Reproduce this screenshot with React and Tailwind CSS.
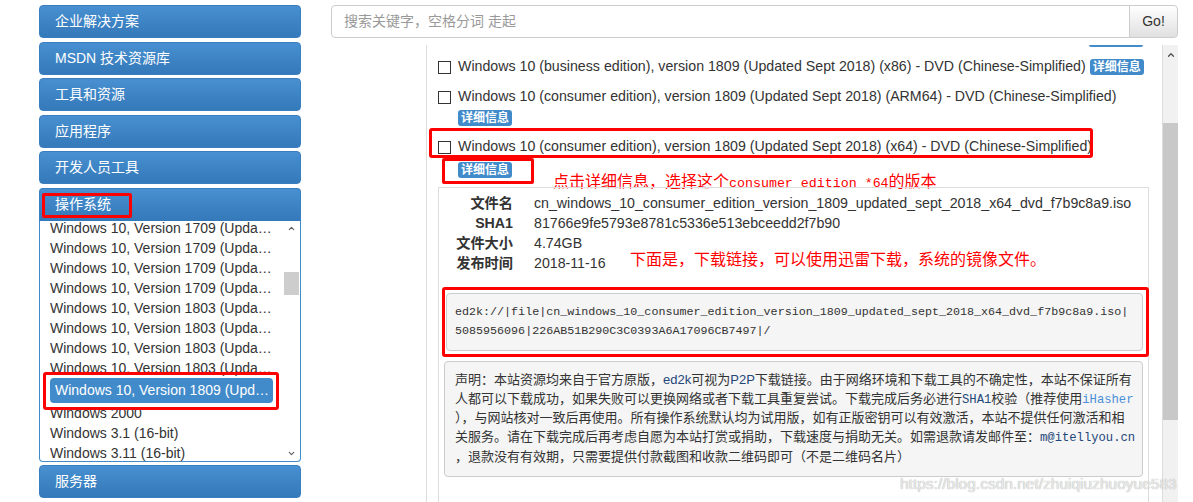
import React from 'react';
import { ChevronUp, ChevronDown } from 'lucide-react';

const menu = ['企业解决方案', 'MSDN 技术资源库', '工具和资源', '应用程序', '开发人员工具'];

const osList = [
  'Windows 10, Version 1709 (Updated Sept 2017) (x64)',
  'Windows 10, Version 1709 (Updated Nov 2017) (x64)',
  'Windows 10, Version 1709 (Updated Dec 2017) (x64)',
  'Windows 10, Version 1709 (Updated Jan 2018) (x64)',
  'Windows 10, Version 1803 (Updated March 2018)',
  'Windows 10, Version 1803 (Updated May 2018)',
  'Windows 10, Version 1803 (Updated Aug 2018)',
  'Windows 10, Version 1803 (Updated Sept 2018)',
];

const details = [
  ['文件名', 'cn_windows_10_consumer_edition_version_1809_updated_sept_2018_x64_dvd_f7b9c8a9.iso'],
  ['SHA1', '81766e9fe5793e8781c5336e513ebceedd2f7b90'],
  ['文件大小', '4.74GB'],
  ['发布时间', '2018-11-16'],
];

function NavButton({ children }) {
  return (
    <div className="h-[33px] shrink-0 rounded-[4px] border border-[#3a7ebf] bg-linear-to-b from-[#4890d1] to-[#3479ba] pl-[15px] flex items-center text-[14px] text-white">
      {children}
    </div>
  );
}

function Badge() {
  return (
    <span className="inline-flex items-center h-[16px] px-[3px] rounded-[3px] bg-[#428bca] text-white text-[12px] font-bold leading-none">
      详细信息
    </span>
  );
}

function Checkbox() {
  return <span className="w-[13px] h-[13px] shrink-0 border border-[#333] bg-white" />;
}

export default function App() {
  return (
    <div className="relative flex w-[1193px] h-[502px] overflow-hidden bg-white text-[#333] font-['Liberation_Sans','Noto_Sans_CJK_SC',sans-serif]">
      {/* Sidebar */}
      <aside className="ml-[39px] pt-[5px] w-[262px] shrink-0 flex flex-col gap-[3.5px]">
        {menu.map((m) => (
          <NavButton key={m}>{m}</NavButton>
        ))}

        <div className="flex flex-col shrink-0">
          <div className="relative h-[33px] rounded-t-[4px] border border-b-0 border-[#3a7ebf] bg-linear-to-b from-[#4890d1] to-[#3479ba] pl-[15px] flex items-center text-[14px] text-white">
            操作系统
            <div className="absolute left-[2px] top-[4px] w-[90px] h-[25px] border-[3px] border-[#f00] rounded-[2px]" />
          </div>
          <div className="h-[241px] flex border border-t-0 border-[#428bca] rounded-b-[4px] bg-white overflow-hidden">
            <div className="flex-1 min-w-0 overflow-hidden">
              <div className="-mt-[3px] pl-[10px] pr-[11px] text-[14px]">
                {osList.map((o, i) => (
                  <div key={i} className="h-[20px] leading-[20px] truncate">{o}</div>
                ))}
                <div className="relative h-[25px]">
                  <div className="h-[25px] leading-[25px] pl-[5px] pr-[2px] rounded-[4px] bg-[#428bca] text-white truncate">
                    Windows 10, Version 1809 (Updated Sept 2018)
                  </div>
                  <div className="absolute -left-[7px] -top-[6px] -right-[6px] -bottom-[7px] border-[3px] border-[#f00] rounded-[3px]" />
                </div>
                <div className="h-[20px] leading-[20px] truncate">Windows 2000</div>
                <div className="h-[20px] leading-[20px] truncate">Windows 3.1 (16-bit)</div>
                <div className="h-[20px] leading-[20px] truncate">Windows 3.11 (16-bit)</div>
              </div>
            </div>
            <div className="w-[15px] mr-[1px] flex flex-col items-center">
              <div className="h-[15px] flex items-center justify-center text-[#606060]">
                <ChevronUp size={9} strokeWidth={3} />
              </div>
              <div className="mt-[36px] w-full h-[23px] bg-[#cdcdcd]" />
              <div className="flex-1" />
              <div className="h-[15px] flex items-center justify-center text-[#606060]">
                <ChevronDown size={9} strokeWidth={3} />
              </div>
            </div>
          </div>
        </div>

        <NavButton>服务器</NavButton>
      </aside>

      {/* Main */}
      <main className="ml-[30px] pt-[5px] w-[847px] shrink-0 flex flex-col">
        <div className="flex h-[33px] shrink-0">
          <div className="flex-1 border border-[#ccc] rounded-l-[4px] flex items-center pl-[12px] text-[14px] text-[#999]">
            搜索关键字，空格分词 走起
          </div>
          <div className="w-[49px] -ml-px border border-[#ccc] rounded-r-[4px] bg-linear-to-b from-white to-[#e0e0e0] flex items-center justify-center text-[14px] text-[#333]">
            Go!
          </div>
        </div>

        <div className="mt-[7px] flex flex-1 min-h-0">
          <div className="ml-[95px] flex-1 min-w-0 border-l border-[#ddd] pl-[11px] overflow-hidden text-[14.2px]">
            <div className="ml-[651px] w-[54px] h-[2px] rounded-b-[3px] bg-[#428bca]" />

            <div className="mt-[10px] h-[20px] flex items-center whitespace-nowrap">
              <Checkbox />
              <span className="ml-[7px]">Windows 10 (business edition), version 1809 (Updated Sept 2018) (x86) - DVD (Chinese-Simplified)</span>
              <span className="ml-[4px] flex"><Badge /></span>
            </div>

            <div className="mt-[10px] h-[20px] flex items-center whitespace-nowrap">
              <Checkbox />
              <span className="ml-[7px]">Windows 10 (consumer edition), version 1809 (Updated Sept 2018) (ARM64) - DVD (Chinese-Simplified)</span>
            </div>
            <div className="mt-[3px] pl-[20px] h-[16px] flex"><Badge /></div>

            <div className="relative mt-[11px] h-[20px] flex items-center whitespace-nowrap">
              <Checkbox />
              <span className="ml-[7px]">Windows 10 (consumer edition), version 1809 (Updated Sept 2018) (x64) - DVD (Chinese-Simplified)</span>
              <div className="absolute -left-[9px] -top-[9px] w-[664px] h-[30px] border-[3px] border-[#f00] rounded-[3px]" />
            </div>
            <div className="relative mt-[5px] pl-[20px] h-[16px] flex">
              <Badge />
              <div className="absolute left-[4px] -top-[4px] w-[92px] h-[26px] border-[3px] border-[#f00] rounded-[2px]" />
              <div className="absolute left-[115px] top-[10px] leading-[20px] text-[16px] text-[#f00] whitespace-nowrap">
                点击详细信息，选择这个<span className="font-['Liberation_Mono'] text-[13.3px]">consumer edition *64</span>的版本
              </div>
            </div>

            {/* Details */}
            <div className="relative mt-[9px] w-[711px] border border-[#ddd] pt-[5px] pb-[40px]">
              {details.map(([k, v]) => (
                <div key={k} className="h-[20px] leading-[20px] flex whitespace-nowrap">
                  <span className="w-[74px] text-right font-bold">{k}</span>
                  <span className="ml-[21px]">{v}</span>
                </div>
              ))}
              <div className="absolute left-[191px] top-[62px] leading-[20px] text-[16px] text-[#f00] whitespace-nowrap">
                下面是，下载链接，可以使用迅雷下载，系统的镜像文件。
              </div>

              <div className="relative mt-[20px] ml-[7px] w-[697px]">
                <div className="bg-[#f5f5f5] border border-[#ccc] rounded-[4px] px-[8px] py-[9px] font-['Liberation_Mono'] text-[11.7px] leading-[19px] whitespace-nowrap text-[#333]">
                  ed2k://|file|cn_windows_10_consumer_edition_version_1809_updated_sept_2018_x64_dvd_f7b9c8a9.iso|
                  <br />
                  5085956096|226AB51B290C3C0393A6A17096CB7497|/
                </div>
                <div className="absolute -left-[4px] -top-[6px] -right-[6px] -bottom-[6px] border-[3px] border-[#f00] rounded-[3px]" />
              </div>

              <div className="mt-[10px] ml-[5px] w-[699px] bg-[#f5f5f5] border border-[#ccc] rounded-[4px] px-[10px] py-[9px] text-[13px] leading-[18.7px] whitespace-nowrap text-[#333]">
                声明：本站资源均来自于官方原版，<span className="text-[#24477a]">ed2k</span>可视为<span className="text-[#24477a]">P2P</span>下载链接。由于网络环境和下载工具的不确定性，本站不保证所有
                <br />
                人都可以下载成功，如果失败可以更换网络或者下载工具重复尝试。下载完成后务必进行<span className="font-['Liberation_Mono'] text-[12.2px] text-[#24477a]">SHA1</span>校验（推荐使用<span className="font-['Liberation_Mono'] text-[12.2px] text-[#4a90d9]">iHasher</span>
                <br />
                ），与网站核对一致后再使用。所有操作系统默认均为试用版，如有正版密钥可以有效激活，本站不提供任何激活和相
                <br />
                关服务。请在下载完成后再考虑自愿为本站打赏或捐助，下载速度与捐助无关。如需退款请发邮件至：<span className="font-['Liberation_Mono'] text-[12.2px] text-[#24477a]">m@itellyou.cn</span>
                <br />
                ，退款没有有效期，只需要提供付款截图和收款二维码即可（不是二维码名片）
              </div>
            </div>
          </div>

          <div className="w-[16px] shrink-0 border-l border-[#ddd] bg-[#f1f1f1] flex flex-col">
            <div className="h-[20px] flex items-center justify-center text-[#505050]">
              <ChevronUp size={10} strokeWidth={3} />
            </div>
            <div className="mt-[58px] h-[297px] bg-[#c8c8c8]" />
          </div>
        </div>
      </main>

      <div className="absolute left-[900px] top-[472px] text-[15.5px] text-[#eaeaea] [text-shadow:0_0_1px_#9a9a9a] whitespace-nowrap">
        https://blog.csdn.net/zhuiqiuzhuoyue583
      </div>
    </div>
  );
}
